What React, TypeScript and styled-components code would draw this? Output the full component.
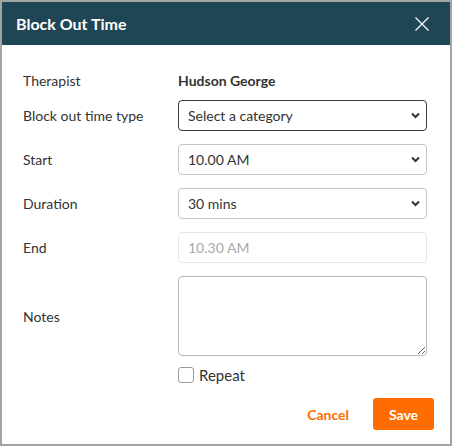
import styled, { createGlobalStyle } from 'styled-components';
import { ReactNode } from 'react';

const GlobalStyle = createGlobalStyle`
  html, body {
    margin: 0;
    padding: 0;
    background: #ffffff;
  }
  body {
    font-family: Lato, "Open Sans", sans-serif;
    color: #333333;
  }
  * {
    box-sizing: border-box;
  }
`;

const Dialog = styled.div`
  width: 452px;
  height: 446px;
  border: 2px solid #a4a4a4;
  background: #ffffff;
  display: flex;
  flex-direction: column;
`;

const Header = styled.div`
  height: 43px;
  background: #1f4654;
  display: flex;
  align-items: center;
  justify-content: space-between;
  padding: 0 20px 0 14px;
`;

const Title = styled.h2`
  margin: 0;
  font-size: 16px;
  font-weight: 700;
  color: #ffffff;
`;

const CloseButton = styled.button`
  border: none;
  background: transparent;
  padding: 0;
  width: 16px;
  height: 16px;
  display: grid;
  place-items: center;
  cursor: pointer;
`;

const Body = styled.div`
  padding: 24px 23px 0 21px;
  display: flex;
  flex-direction: column;
`;

const Row = styled.div<{ $top: number; $height: number }>`
  display: grid;
  grid-template-columns: 155px 1fr;
  align-items: center;
  margin-top: ${({ $top }) => $top}px;
  min-height: ${({ $height }) => $height}px;
`;

const Label = styled.span`
  font-size: 14px;
  color: #333333;
`;

const Value = styled.span`
  font-size: 14px;
  font-weight: 700;
  color: #333333;
`;

const SelectWrap = styled.div`
  position: relative;
  height: 31px;
`;

const Select = styled.select<{ $active?: boolean }>`
  appearance: none;
  width: 100%;
  height: 31px;
  border: 1px solid ${({ $active }) => ($active ? '#3a3a3a' : '#c6c6c6')};
  border-radius: 4px;
  background: #ffffff;
  padding: 0 28px 0 9px;
  font-family: Lato, "Open Sans", sans-serif;
  font-size: 14px;
  color: #333333;
  outline: none;
`;

const Chevron = styled.svg`
  position: absolute;
  right: 7px;
  top: 12px;
  width: 9px;
  height: 7px;
  pointer-events: none;
`;

const TextInput = styled.input`
  width: 100%;
  height: 31px;
  border: 1px solid #e6e6e6;
  border-radius: 4px;
  background: #ffffff;
  padding: 0 9px;
  font-family: Lato, "Open Sans", sans-serif;
  font-size: 14px;
  color: #aaaaaa;
  &::placeholder {
    color: #aaaaaa;
  }
`;

const NotesArea = styled.textarea`
  width: 100%;
  height: 80px;
  border: 1px solid #b8b8b8;
  border-radius: 4px;
  padding: 6px 9px;
  font-family: Lato, "Open Sans", sans-serif;
  font-size: 14px;
  display: block;
  resize: both;
`;

const CheckRow = styled.label`
  grid-column: 2;
  display: flex;
  align-items: center;
  gap: 5px;
  font-size: 15px;
  color: #333333;
  cursor: pointer;
`;

const CheckBox = styled.input`
  appearance: none;
  margin: 0;
  width: 16px;
  height: 16px;
  border: 1px solid #9a9a9a;
  border-radius: 3px;
  background: #ffffff;
`;

const Footer = styled.div`
  display: flex;
  justify-content: flex-end;
  align-items: center;
  gap: 18px;
  padding: 14px 16px 0 0;
`;

const TextButton = styled.button`
  border: none;
  background: transparent;
  color: #ff6d00;
  font-family: Lato, "Open Sans", sans-serif;
  font-size: 14px;
  font-weight: 700;
  padding: 0 6px;
  height: 32px;
  cursor: pointer;
`;

const PrimaryButton = styled.button`
  border: none;
  background: #ff6d00;
  color: #ffffff;
  font-family: Lato, "Open Sans", sans-serif;
  font-size: 14px;
  font-weight: 700;
  width: 61px;
  height: 32px;
  border-radius: 3px;
  cursor: pointer;
`;

function SelectField({ value, active }: { value: string; active?: boolean }) {
  return (
    <SelectWrap>
      <Select $active={active} defaultValue={value}>
        <option>{value}</option>
      </Select>
      <Chevron viewBox="0 0 9 7" aria-hidden="true">
        <path d="M1 1.5l3.5 3.5L8 1.5" fill="none" stroke="#333" strokeWidth="2" />
      </Chevron>
    </SelectWrap>
  );
}

function FormRow({ label, top, height, children }: { label: string; top: number; height: number; children: ReactNode }) {
  return (
    <Row $top={top} $height={height}>
      <Label>{label}</Label>
      {children}
    </Row>
  );
}

export default function App() {
  return (
    <>
      <GlobalStyle />
      <Dialog>
        <Header>
          <Title>Block Out Time</Title>
          <CloseButton aria-label="Close">
            <svg width="14" height="14" viewBox="0 0 14 14">
              <path d="M0.5 0.5l13 13M13.5 0.5l-13 13" stroke="#ffffff" strokeWidth="1.2" />
            </svg>
          </CloseButton>
        </Header>
        <Body>
          <FormRow label="Therapist" top={0} height={22}>
            <Value>Hudson George</Value>
          </FormRow>
          <FormRow label="Block out time type" top={9} height={31}>
            <SelectField value="Select a category" active />
          </FormRow>
          <FormRow label="Start" top={13} height={31}>
            <SelectField value="10.00 AM" />
          </FormRow>
          <FormRow label="Duration" top={13} height={31}>
            <SelectField value="30 mins" />
          </FormRow>
          <FormRow label="End" top={13} height={31}>
            <TextInput disabled placeholder="10.30 AM" />
          </FormRow>
          <FormRow label="Notes" top={13} height={80}>
            <NotesArea />
          </FormRow>
          <Row $top={10} $height={16}>
            <CheckRow>
              <CheckBox type="checkbox" />
              Repeat
            </CheckRow>
          </Row>
        </Body>
        <Footer>
          <TextButton>Cancel</TextButton>
          <PrimaryButton>Save</PrimaryButton>
        </Footer>
      </Dialog>
    </>
  );
}
